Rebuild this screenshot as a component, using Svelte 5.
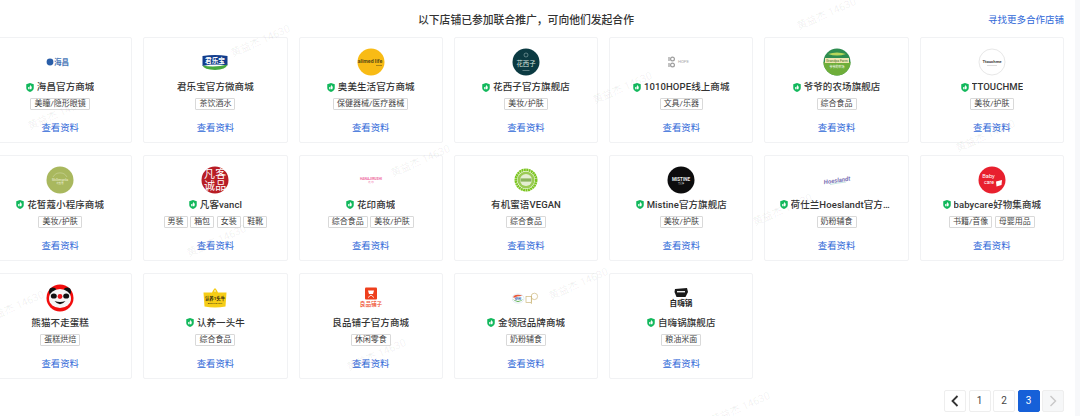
<script>
  const shops = [
    { name: '海昌官方商城', logo: 'haichang', ok: true, tags: ['美瞳/隐形眼镜'] },
    { name: '君乐宝官方微商城', logo: 'junlebao', ok: false, tags: ['茶饮酒水'] },
    { name: '奥美生活官方商城', logo: 'aomei', ok: true, tags: ['保健器械/医疗器械'] },
    { name: '花西子官方旗舰店', logo: 'huaxizi', ok: true, tags: ['美妆/护肤'] },
    { name: '1010HOPE线上商城', logo: 'hope', ok: true, tags: ['文具/乐器'] },
    { name: '爷爷的农场旗舰店', logo: 'farm', ok: true, tags: ['综合食品'] },
    { name: 'TTOUCHME', logo: 'ttouch', ok: true, tags: ['美妆/护肤'] },
    { name: '花皙蔻小程序商城', logo: 'hxk', ok: true, tags: ['美妆/护肤'] },
    { name: '凡客vancl', logo: 'vancl', ok: true, tags: ['男装', '箱包', '女装', '鞋靴'] },
    { name: '花印商城', logo: 'hanajirushi', ok: true, tags: ['综合食品', '美妆/护肤'] },
    { name: '有机蜜语VEGAN', logo: 'vegan', ok: false, tags: ['综合食品'] },
    { name: 'Mistine官方旗舰店', logo: 'mistine', ok: true, tags: ['美妆/护肤'] },
    { name: '荷仕兰Hoeslandt官方旗舰店', logo: 'hoeslandt', ok: true, tags: ['奶粉辅食'] },
    { name: 'babycare好物集商城', logo: 'babycare', ok: true, tags: ['书籍/音像', '母婴用品'] },
    { name: '熊猫不走蛋糕', logo: 'panda', ok: false, tags: ['蛋糕烘焙'] },
    { name: '认养一头牛', logo: 'cow', ok: true, tags: ['综合食品'] },
    { name: '良品铺子官方商城', logo: 'liangpin', ok: false, tags: ['休闲零食'] },
    { name: '金领冠品牌商城', logo: 'jinlingguan', ok: true, tags: ['奶粉辅食'] },
    { name: '自嗨锅旗舰店', logo: 'zihaiguo', ok: true, tags: ['粮油米面'] },
  ];

  const marks = [
    [260, 40], [57, 113], [622, 87], [826, 13], [985, 135], [216, 240],
    [420, 160], [782, 209], [14, 306], [578, 283], [376, 354], [740, 407],
  ];
</script>

{#snippet logo(kind)}
  <svg class="logo" viewBox="0 0 28 28" aria-hidden="true">
    {#if kind === 'haichang'}
      <circle cx="4" cy="14" r="3.4" fill="#2a5ea8" />
      <text x="8" y="16.6" font-size="7.6" font-weight="700" fill="#4a78b8">海昌</text>
    {:else if kind === 'junlebao'}
      <path d="M1.5 8 Q14 6 26.5 8 L26.5 17.5 Q14 15.5 1.5 18 Z" fill="#123d8c" />
      <path d="M1.5 17.5 Q14 20 26.5 16.5 Q25 21.5 14 22 Q3 21.5 1.5 17.5 Z" fill="#47a83f" />
      <text x="14" y="15" font-size="6.6" font-weight="700" fill="#fff" text-anchor="middle">君乐宝</text>
    {:else if kind === 'aomei'}
      <circle cx="14" cy="14" r="13.5" fill="#f8bb15" />
      <text x="13" y="15" font-size="5.2" font-weight="700" fill="#5a4a14" text-anchor="middle">alimed life</text>
      <rect x="19" y="17" width="6" height=".7" fill="#8a6d14" />
    {:else if kind === 'huaxizi'}
      <circle cx="14" cy="14" r="13.5" fill="#0b3a42" />
      <circle cx="14" cy="7" r="2" fill="none" stroke="#a9c2c2" stroke-width=".5" />
      <text x="14" y="18.4" font-size="6.4" fill="#d5e2dd" text-anchor="middle">花西子</text>
      <rect x="10.5" y="22" width="7" height=".7" fill="#7f9c9c" />
    {:else if kind === 'hope'}
      <g fill="none" stroke="#9c9c9c" stroke-width="1.2">
        <circle cx="5.5" cy="11" r="1.9" />
        <circle cx="5.5" cy="17" r="1.9" />
      </g>
      <path d="M2 9 v4 M2 15 v4" stroke="#9c9c9c" stroke-width="1.2" />
      <text x="11" y="15.4" font-size="4.2" fill="#a6a6a6">HOPE</text>
    {:else if kind === 'farm'}
      <circle cx="14" cy="14" r="13.5" fill="#2e8d50" />
      <path d="M.5 14 H27.5 A13.5 13.5 0 0 1 .5 14 Z" fill="#6fae3a" />
      <path d="M5 6 Q14 3 23 6 Q14 9 5 6 Z" fill="#b6d65a" />
      <rect x="2" y="10" width="24" height="5" fill="#efe7b2" />
      <text x="14" y="13.8" font-size="3.4" fill="#3f6a2a" text-anchor="middle">Grandpa Farm</text>
      <text x="14" y="20" font-size="3" fill="#fff" text-anchor="middle">爷爷的农场</text>
    {:else if kind === 'ttouch'}
      <circle cx="14" cy="14" r="13" fill="#fff" stroke="#ddd" stroke-width=".7" />
      <text x="14" y="15.4" font-size="4.2" font-weight="700" fill="#444" text-anchor="middle">Ttouchme</text>
      <rect x="9" y="17.5" width="10" height=".5" fill="#bbb" />
    {:else if kind === 'hxk'}
      <circle cx="14" cy="14" r="13.5" fill="#a9b85e" />
      <path d="M7 11 A8 8 0 0 1 21 11" fill="none" stroke="#d5dcae" stroke-width=".5" />
      <text x="14" y="14.6" font-size="2.9" fill="#edf0d9" text-anchor="middle">McGrenanlia</text>
      <text x="14" y="18" font-size="2.4" fill="#edf0d9" text-anchor="middle">花皙蔻</text>
    {:else if kind === 'vancl'}
      <circle cx="14" cy="14" r="13.5" fill="#b81d25" />
      <text x="8.4" y="12.4" font-size="11" fill="#fff" text-anchor="middle">凡</text>
      <text x="19.8" y="11.6" font-size="11" fill="#fff" text-anchor="middle">客</text>
      <text x="8.4" y="23.8" font-size="11" fill="#fff" text-anchor="middle">诚</text>
      <text x="19.8" y="23.8" font-size="11" fill="#fff" text-anchor="middle">品</text>
    {:else if kind === 'hanajirushi'}
      <text x="14" y="14" font-size="3.4" font-weight="700" fill="#ee6a9f" text-anchor="middle">HANAJIRUSHI</text>
      <text x="14" y="17.4" font-size="2.4" fill="#ee6a9f" text-anchor="middle">花 印</text>
    {:else if kind === 'vegan'}
      <circle cx="14" cy="14" r="10.2" fill="none" stroke="#7cc520" stroke-width="2.6" stroke-dasharray="2 .4" />
      <circle cx="14" cy="14" r="8.6" fill="#9bcb55" />
      <circle cx="14" cy="14" r="6" fill="#e4eed2" />
      <rect x="8.5" y="12.4" width="11" height="3.2" fill="#8ab35c" />
    {:else if kind === 'mistine'}
      <circle cx="14" cy="14" r="13.5" fill="#0c0c0d" />
      <text x="14" y="14.6" font-size="4.5" font-weight="700" fill="#eee" text-anchor="middle">MISTINE</text>
      <text x="14" y="18" font-size="2" fill="#bbb" text-anchor="middle">蜜丝婷</text>
    {:else if kind === 'hoeslandt'}
      <text x="14" y="16.4" font-size="6" font-style="italic" font-weight="700" fill="#7a71b4" text-anchor="middle" transform="rotate(-8 14 14)">Hoeslandt</text>
      <path d="M7 18.5 Q14 17 23 16" fill="none" stroke="#9fd2cf" stroke-width=".6" />
    {:else if kind === 'babycare'}
      <circle cx="14" cy="14" r="13.5" fill="#e8202e" />
      <text x="10.5" y="11.6" font-size="5.8" fill="#fff" text-anchor="middle">Baby</text>
      <text x="11" y="18" font-size="5.2" fill="#fff" text-anchor="middle">care</text>
      <path d="M18 15.5 L24 14 L23.5 19 L18.5 20.5 Z" fill="#fff" />
    {:else if kind === 'panda'}
      <circle cx="14" cy="14" r="13.5" fill="#f20d0d" />
      <circle cx="6.8" cy="7.4" r="3.8" fill="#111" />
      <circle cx="21.2" cy="7.4" r="3.8" fill="#111" />
      <ellipse cx="14" cy="14.5" rx="11" ry="9.6" fill="#f6f6f6" />
      <ellipse cx="7.8" cy="12" rx="3" ry="2.6" fill="#111" />
      <ellipse cx="20.2" cy="12" rx="3" ry="2.6" fill="#111" />
      <circle cx="14" cy="12.5" r="2.4" fill="#e8151a" />
      <path d="M8.5 17 Q14 23.5 19.5 17 Q14 19 8.5 17 Z" fill="#111" />
    {:else if kind === 'cow'}
      <path d="M2.5 8.5 H11 Q12 5.5 14 4 Q16 5.5 17 8.5 H25.5 L24.5 22.5 Q14 24.5 3.5 22.5 Z" fill="#f6cd17" />
      <circle cx="14" cy="7" r=".8" fill="#fff" />
      <text x="14" y="15.6" font-size="4.4" font-weight="700" fill="#2c2410" text-anchor="middle">认养1头牛</text>
      <text x="14" y="19.6" font-size="2.2" fill="#2c2410" text-anchor="middle">ADOPT A COW</text>
    {:else if kind === 'liangpin'}
      <rect x="8" y="3.6" width="12" height="12" rx="1" fill="#ee3f1c" />
      <path d="M11 6.6 H17 L16 10 H12 Z" fill="#fff" />
      <path d="M11 13.6 L14 11 L17 13.6" fill="none" stroke="#fff" stroke-width=".8" />
      <text x="14" y="21.6" font-size="5.6" font-weight="500" fill="#ee4a2a" text-anchor="middle">良品铺子</text>
    {:else if kind === 'jinlingguan'}
      <ellipse cx="6" cy="14.5" rx="6" ry="4.6" fill="#fff" stroke="#c6d9ec" stroke-width=".5" />
      <path d="M.5 15 Q6 19 11.5 15 Q6 21 .5 15 Z" fill="#57ad45" />
      <path d="M1.5 12 Q6 9.5 10.5 12 Q6 11.4 1.5 14 Z" fill="#e95a3a" />
      <text x="6" y="15.6" font-size="3.2" font-weight="700" fill="#1f5aa8" text-anchor="middle">伊利</text>
      <rect x="14" y="12.6" width="5.4" height="6" fill="none" stroke="#cdb77c" stroke-width=".7" />
      <circle cx="22.4" cy="12.4" r="3.2" fill="none" stroke="#cdb77c" stroke-width=".7" />
      <path d="M19.4 12 V20" stroke="#cdb77c" stroke-width=".7" />
    {:else if kind === 'zihaiguo'}
      <path d="M8 5 L20 4 L21 8 L18.5 13 H9.5 L7.5 8 Z" fill="#191919" />
      <rect x="10" y="7" width="8" height="1.4" fill="#eee" />
      <text x="14" y="21.6" font-size="7.6" font-weight="700" fill="#222" text-anchor="middle">自嗨锅</text>
    {/if}
  </svg>
{/snippet}

<div class="page">
  <main class="content">
    <header class="head">
      <span></span>
      <h1>以下店铺已参加联合推广，可向他们发起合作</h1>
      <a class="more" href="#more">寻找更多合作店铺</a>
    </header>

    <div class="grid">
      {#each shops as shop}
        <article class="card">
          {@render logo(shop.logo)}
          <div class="name">
            {#if shop.ok}
              <svg class="badge" viewBox="0 0 16 18" aria-hidden="true">
                <path d="M8 0 L15.5 2.4 V10 Q15.5 15 8 18 Q.5 15 .5 10 V2.4 Z" fill="#12b85c" />
                <path d="M4.4 8 H6.2 V12.6 H4.4 Z M7 8 L9 4.2 Q10.2 4.6 9.8 6.8 H11.8 L10.8 12.6 H7 Z" fill="#fff" />
              </svg>
            {/if}
            <span class="name-text">{shop.name}</span>
          </div>
          <div class="tags">
            {#each shop.tags as tag}
              <span class="tag">{tag}</span>
            {/each}
          </div>
          <a class="view" href="#view">查看资料</a>
        </article>
      {/each}
    </div>

    <nav class="pager">
      <button class="page-btn" aria-label="上一页">
        <svg viewBox="0 0 10 14"><path d="M7.5 2 L2.5 7 L7.5 12" fill="none" stroke="#333" stroke-width="1.8" /></svg>
      </button>
      <button class="page-btn">1</button>
      <button class="page-btn">2</button>
      <button class="page-btn active">3</button>
      <button class="page-btn off" aria-label="下一页">
        <svg viewBox="0 0 10 14"><path d="M2.5 2 L7.5 7 L2.5 12" fill="none" stroke="#c8c8c8" stroke-width="1.4" /></svg>
      </button>
    </nav>
  </main>
  <div class="rail"></div>

  {#each marks as [x, y]}
    <span class="mark" style="left: {x}px; top: {y}px;">黄益杰 14630</span>
  {/each}
</div>

<style>
  :global(body) {
    background: #fff;
    overflow: hidden;
  }

  .page {
    position: relative;
    display: flex;
    width: 1080px;
    height: 416px;
    overflow: hidden;
    font-family: "Roboto", "Noto Sans CJK SC", sans-serif;
    color: #333;
  }

  .content {
    flex: none;
    width: 1076px;
    margin-left: -12px;
  }

  .rail {
    flex: 1;
    margin-left: 11px;
    background: #f7f8fa;
  }

  .head {
    display: grid;
    grid-template-columns: 1fr auto 1fr;
    align-items: center;
    height: 37px;
  }

  h1 {
    margin: 0;
    font-size: 10.8px;
    font-weight: 500;
    color: #333;
  }

  .more {
    justify-self: end;
    font-size: 9.5px;
    color: #2f68d8;
    text-decoration: none;
  }

  .grid {
    display: grid;
    grid-template-columns: repeat(7, 1fr);
    grid-auto-rows: 106px;
    gap: 11.8px 11px;
  }

  .card {
    display: flex;
    flex-direction: column;
    align-items: center;
    min-width: 0;
    padding-top: 10px;
    border: 1px solid #f1f2f4;
    border-radius: 2px;
    box-sizing: border-box;
  }

  .logo {
    display: block;
    flex: none;
    width: 28px;
    height: 28px;
  }

  .name {
    display: flex;
    align-items: center;
    justify-content: center;
    gap: 3px;
    max-width: 114px;
    height: 14px;
    margin-top: 4px;
  }

  .badge {
    flex: none;
    width: 8px;
    height: 9px;
  }

  .name-text {
    overflow: hidden;
    font-size: 9.5px;
    font-weight: 500;
    line-height: 14px;
    white-space: nowrap;
    text-overflow: ellipsis;
    letter-spacing: 0.1px;
  }

  .tags {
    display: flex;
    justify-content: center;
    gap: 2.6px;
    margin-top: 4px;
  }

  .tag {
    padding: 0 3px;
    border: 1px solid #d9d9d9;
    border-radius: 1px;
    font-size: 8px;
    line-height: 10px;
    color: #444;
    white-space: nowrap;
  }

  .view {
    margin-top: 11px;
    font-size: 9.4px;
    line-height: 14px;
    color: #2f68d8;
    text-decoration: none;
  }

  .pager {
    display: flex;
    justify-content: flex-end;
    gap: 2.5px;
    margin-top: 11px;
  }

  .page-btn {
    display: flex;
    align-items: center;
    justify-content: center;
    width: 22px;
    height: 22px;
    padding: 0;
    border: 1px solid #eee;
    border-radius: 2px;
    background: #fff;
    font-family: inherit;
    font-size: 10px;
    color: #444;
  }

  .page-btn svg {
    width: 10px;
    height: 14px;
  }

  .page-btn.active {
    border-color: #1660d8;
    background: #1660d8;
    color: #fff;
  }

  .page-btn.off {
    background: #f6f7f8;
  }

  .mark {
    position: absolute;
    transform: translate(-50%, -50%) rotate(-24deg);
    font-size: 10.5px;
    color: rgba(0, 0, 0, 0.07);
    white-space: nowrap;
    pointer-events: none;
  }
</style>
